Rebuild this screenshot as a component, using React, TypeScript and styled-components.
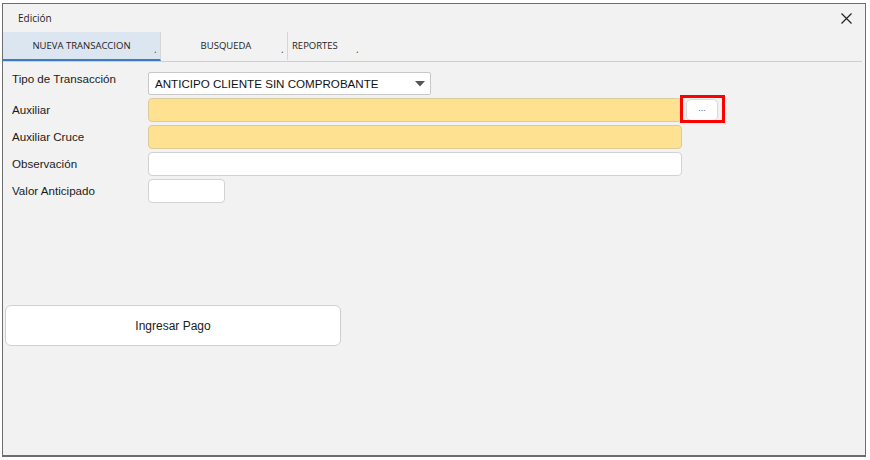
import React from "react";
import styled, { createGlobalStyle } from "styled-components";

const Global = createGlobalStyle`
  html, body { margin: 0; padding: 0; background: #ffffff; }
  body { font-family: "Liberation Sans", Arial, sans-serif; }
  * { box-sizing: border-box; }
`;

const Window = styled.div`
  margin: 3px 0 0 2px;
  width: 864px;
  height: 454px;
  border: 1px solid #6e6e6e;
  border-bottom-width: 2px;
  background: #f2f2f2;
  display: flex;
  flex-direction: column;
`;

const TitleBar = styled.div`
  height: 28px;
  display: flex;
  align-items: center;
  justify-content: space-between;
  padding: 0 12px 0 15px;
`;

const Title = styled.span`
  font-family: "Open Sans", "Noto Sans", sans-serif;
  font-size: 10px;
  color: #222;
`;

const Close = styled.button`
  border: none;
  background: transparent;
  padding: 0;
  width: 14px;
  height: 14px;
  display: flex;
  align-items: center;
  justify-content: center;
`;

const TabBar = styled.div`
  height: 30px;
  margin-right: 3px;
  display: flex;
  border-bottom: 1px solid #cfcfcf;
`;

const Tab = styled.div<{ $w: number; $active?: boolean; $pad: number; $left?: boolean; $last?: boolean }>`
  width: ${(p) => p.$w}px;
  display: flex;
  align-items: center;
  justify-content: ${(p) => (p.$left ? "flex-start" : "center")};
  padding-left: ${(p) => p.$pad}px;
  position: relative;
  background: ${(p) => (p.$active ? "#dce6f0" : "transparent")};
  border-bottom: 2px solid ${(p) => (p.$active ? "#3d7ac7" : "transparent")};
  border-right: ${(p) => (p.$last ? "none" : "1px solid #d6d6d6")};
  font-family: "Open Sans", "Noto Sans", sans-serif;
  font-size: 9.5px;
  font-weight: 500;
  color: #1c1c1c;
`;

const TabDot = styled.span<{ $x: number }>`
  position: absolute;
  left: ${(p) => p.$x}px;
  top: 10px;
  font-size: 10px;
  color: #444;
`;

const Body = styled.div`
  padding: 10px 0 0 6px;
  display: flex;
  flex-direction: column;
`;

const Form = styled.div`
  display: grid;
  grid-template-columns: 139px auto;
  row-gap: 3px;
  align-items: center;
`;

const Label = styled.label<{ $top?: number }>`
  font-size: 11.6px;
  color: #1a1a1a;
  padding-left: 3px;
  align-self: start;
  padding-top: ${(p) => p.$top ?? 5}px;
`;

const FieldRow = styled.div`
  display: flex;
  align-items: center;
  position: relative;
`;

const Select = styled.div`
  width: 283px;
  height: 23px;
  background: #fff;
  border: 1px solid #c8c8c8;
  border-radius: 2px;
  display: flex;
  align-items: center;
  justify-content: space-between;
  padding: 0 5px 0 6px;
  font-size: 11.6px;
  color: #111;
`;

const Input = styled.div<{ $w: number; $yellow?: boolean }>`
  width: ${(p) => p.$w}px;
  height: 24px;
  background: ${(p) => (p.$yellow ? "#ffe291" : "#ffffff")};
  border: 1px solid ${(p) => (p.$yellow ? "#dccb9a" : "#d2d2d2")};
  border-radius: 4px;
`;

const DotsButton = styled.button`
  margin-left: 4px;
  width: 32px;
  height: 22px;
  background: #fff;
  border: 1px solid #d8d8d8;
  border-radius: 5px;
  font-size: 9px;
  color: #6a4a8a;
  padding: 0 0 4px;
  font-family: "Liberation Sans", Arial, sans-serif;
`;

const Highlight = styled.div`
  position: absolute;
  left: 532px;
  top: -3px;
  width: 45px;
  height: 28px;
  border: 3px solid #ff0000;
  pointer-events: none;
`;

const Action = styled.button`
  margin: 102px 0 0 -4px;
  width: 336px;
  height: 41px;
  background: #fff;
  border: 1px solid #d0d0d0;
  border-radius: 6px;
  font-family: "Liberation Sans", Arial, sans-serif;
  font-size: 12px;
  color: #1a1a1a;
`;

export default function App() {
  return (
    <>
      <Global />
      <Window>
        <TitleBar>
          <Title>Edición</Title>
          <Close aria-label="Cerrar">
            <svg width="11" height="11" viewBox="0 0 11 11">
              <path d="M0.5 0.5 L10.5 10.5 M10.5 0.5 L0.5 10.5" stroke="#222" strokeWidth="1.2" />
            </svg>
          </Close>
        </TitleBar>
        <TabBar>
          <Tab $w={158} $active $pad={0}>
            NUEVA TRANSACCION<TabDot $x={151}>.</TabDot>
          </Tab>
          <Tab $w={127} $pad={4}>
            BUSQUEDA<TabDot $x={120}>.</TabDot>
          </Tab>
          <Tab $w={80} $pad={4} $left $last>
            REPORTES<TabDot $x={68}>.</TabDot>
          </Tab>
        </TabBar>
        <Body>
          <Form>
            <Label $top={0}>Tipo de Transacción</Label>
            <FieldRow>
              <Select>
                <span>ANTICIPO CLIENTE SIN COMPROBANTE</span>
                <svg width="10" height="6" viewBox="0 0 10 6">
                  <path d="M0 0 H10 L5 5.5 Z" fill="#555" />
                </svg>
              </Select>
            </FieldRow>
            <Label>Auxiliar</Label>
            <FieldRow>
              <Input $w={534} $yellow />
              <DotsButton>...</DotsButton>
              <Highlight />
            </FieldRow>
            <Label>Auxiliar Cruce</Label>
            <FieldRow>
              <Input $w={534} $yellow />
            </FieldRow>
            <Label>Observación</Label>
            <FieldRow>
              <Input $w={534} />
            </FieldRow>
            <Label>Valor Anticipado</Label>
            <FieldRow>
              <Input $w={77} />
            </FieldRow>
          </Form>
          <Action>Ingresar Pago</Action>
        </Body>
      </Window>
    </>
  );
}
